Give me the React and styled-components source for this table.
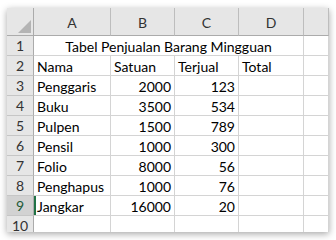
import React from "react";
import styled, { createGlobalStyle } from "styled-components";

const columns = ["A", "B", "C", "D", ""];

const rows = [
  ["Penggaris", 2000, 123],
  ["Buku", 3500, 534],
  ["Pulpen", 1500, 789],
  ["Pensil", 1000, 300],
  ["Folio", 8000, 56],
  ["Penghapus", 1000, 76],
  ["Jangkar", 16000, 20],
];

const App = () => {
  return (
    <Page>
      <GlobalStyle />
      <Sheet>
        <Corner>
          <Triangle />
        </Corner>
        {columns.map((c, i) => (
          <ColHead key={i}>{c}</ColHead>
        ))}

        <RowHead>1</RowHead>
        <Cell $span={4} $align="center">
          Tabel Penjualan Barang Mingguan
        </Cell>
        <Cell />

        <RowHead>2</RowHead>
        <Cell>Nama</Cell>
        <Cell>Satuan</Cell>
        <Cell>Terjual</Cell>
        <Cell>Total</Cell>
        <Cell />

        {rows.map((r, i) => {
          const active = i === rows.length - 1;
          return (
            <React.Fragment key={r[0]}>
              <RowHead $active={active}>{i + 3}</RowHead>
              <Cell $cursor={active}>{r[0]}</Cell>
              <Cell $align="right">{r[1]}</Cell>
              <Cell $align="right">{r[2]}</Cell>
              <Cell />
              <Cell />
            </React.Fragment>
          );
        })}

        <RowHead>10</RowHead>
        <Cell />
        <Cell />
        <Cell />
        <Cell />
        <Cell />
      </Sheet>
    </Page>
  );
};

export default App;

const GlobalStyle = createGlobalStyle`
  body {
    margin: 0;
    background: #ffffff;
    font-family: Lato, "Liberation Sans", sans-serif;
  }
`;

const Page = styled.div`
  width: 336px;
  height: 240px;
  padding: 8px 7px;
  box-sizing: border-box;
`;

const Sheet = styled.div`
  width: 322px;
  height: 224px;
  overflow: hidden;
  display: grid;
  grid-template-columns: 27px 77px 64px 64px 65px 1fr;
  grid-template-rows: 28px;
  grid-auto-rows: 20px;
  background: #ffffff;
  box-shadow: 0 2px 7px rgba(0, 0, 0, 0.35);
  font-size: 14px;
  color: #000;
`;

const Corner = styled.div`
  position: relative;
  background: #e6e6e6;
  border-right: 1px solid #ababab;
  border-bottom: 1px solid #ababab;
`;

const Triangle = styled.div`
  position: absolute;
  right: 2px;
  bottom: 2px;
  width: 0;
  height: 0;
  border-left: 13px solid transparent;
  border-bottom: 13px solid #b4b4b4;
`;

const ColHead = styled.div`
  background: #e6e6e6;
  border-right: 1px solid #bdbdbd;
  border-bottom: 1px solid #ababab;
  display: flex;
  align-items: center;
  justify-content: center;
  padding-top: 2px;
  color: #333;
`;

const RowHead = styled.div`
  background: ${(p) => (p.$active ? "#d2d2d2" : "#e6e6e6")};
  border-right: 1px solid #ababab;
  border-bottom: 1px solid #c6c6c6;
  display: flex;
  align-items: center;
  justify-content: center;
  color: ${(p) => (p.$active ? "#1d5a38" : "#333")};
`;

const Cell = styled.div`
  position: relative;
  grid-column: span ${(p) => p.$span || 1};
  border-right: 1px solid #d4d4d4;
  border-bottom: 1px solid #d4d4d4;
  display: flex;
  align-items: center;
  justify-content: ${(p) =>
    p.$align === "center" ? "center" : p.$align === "right" ? "flex-end" : "flex-start"};
  padding: 1px 3px 0;
  white-space: nowrap;
  overflow: hidden;

  &::before {
    content: "";
    display: ${(p) => (p.$cursor ? "block" : "none")};
    position: absolute;
    left: 0;
    top: 0;
    bottom: 0;
    width: 2px;
    background: #217346;
  }
`;
